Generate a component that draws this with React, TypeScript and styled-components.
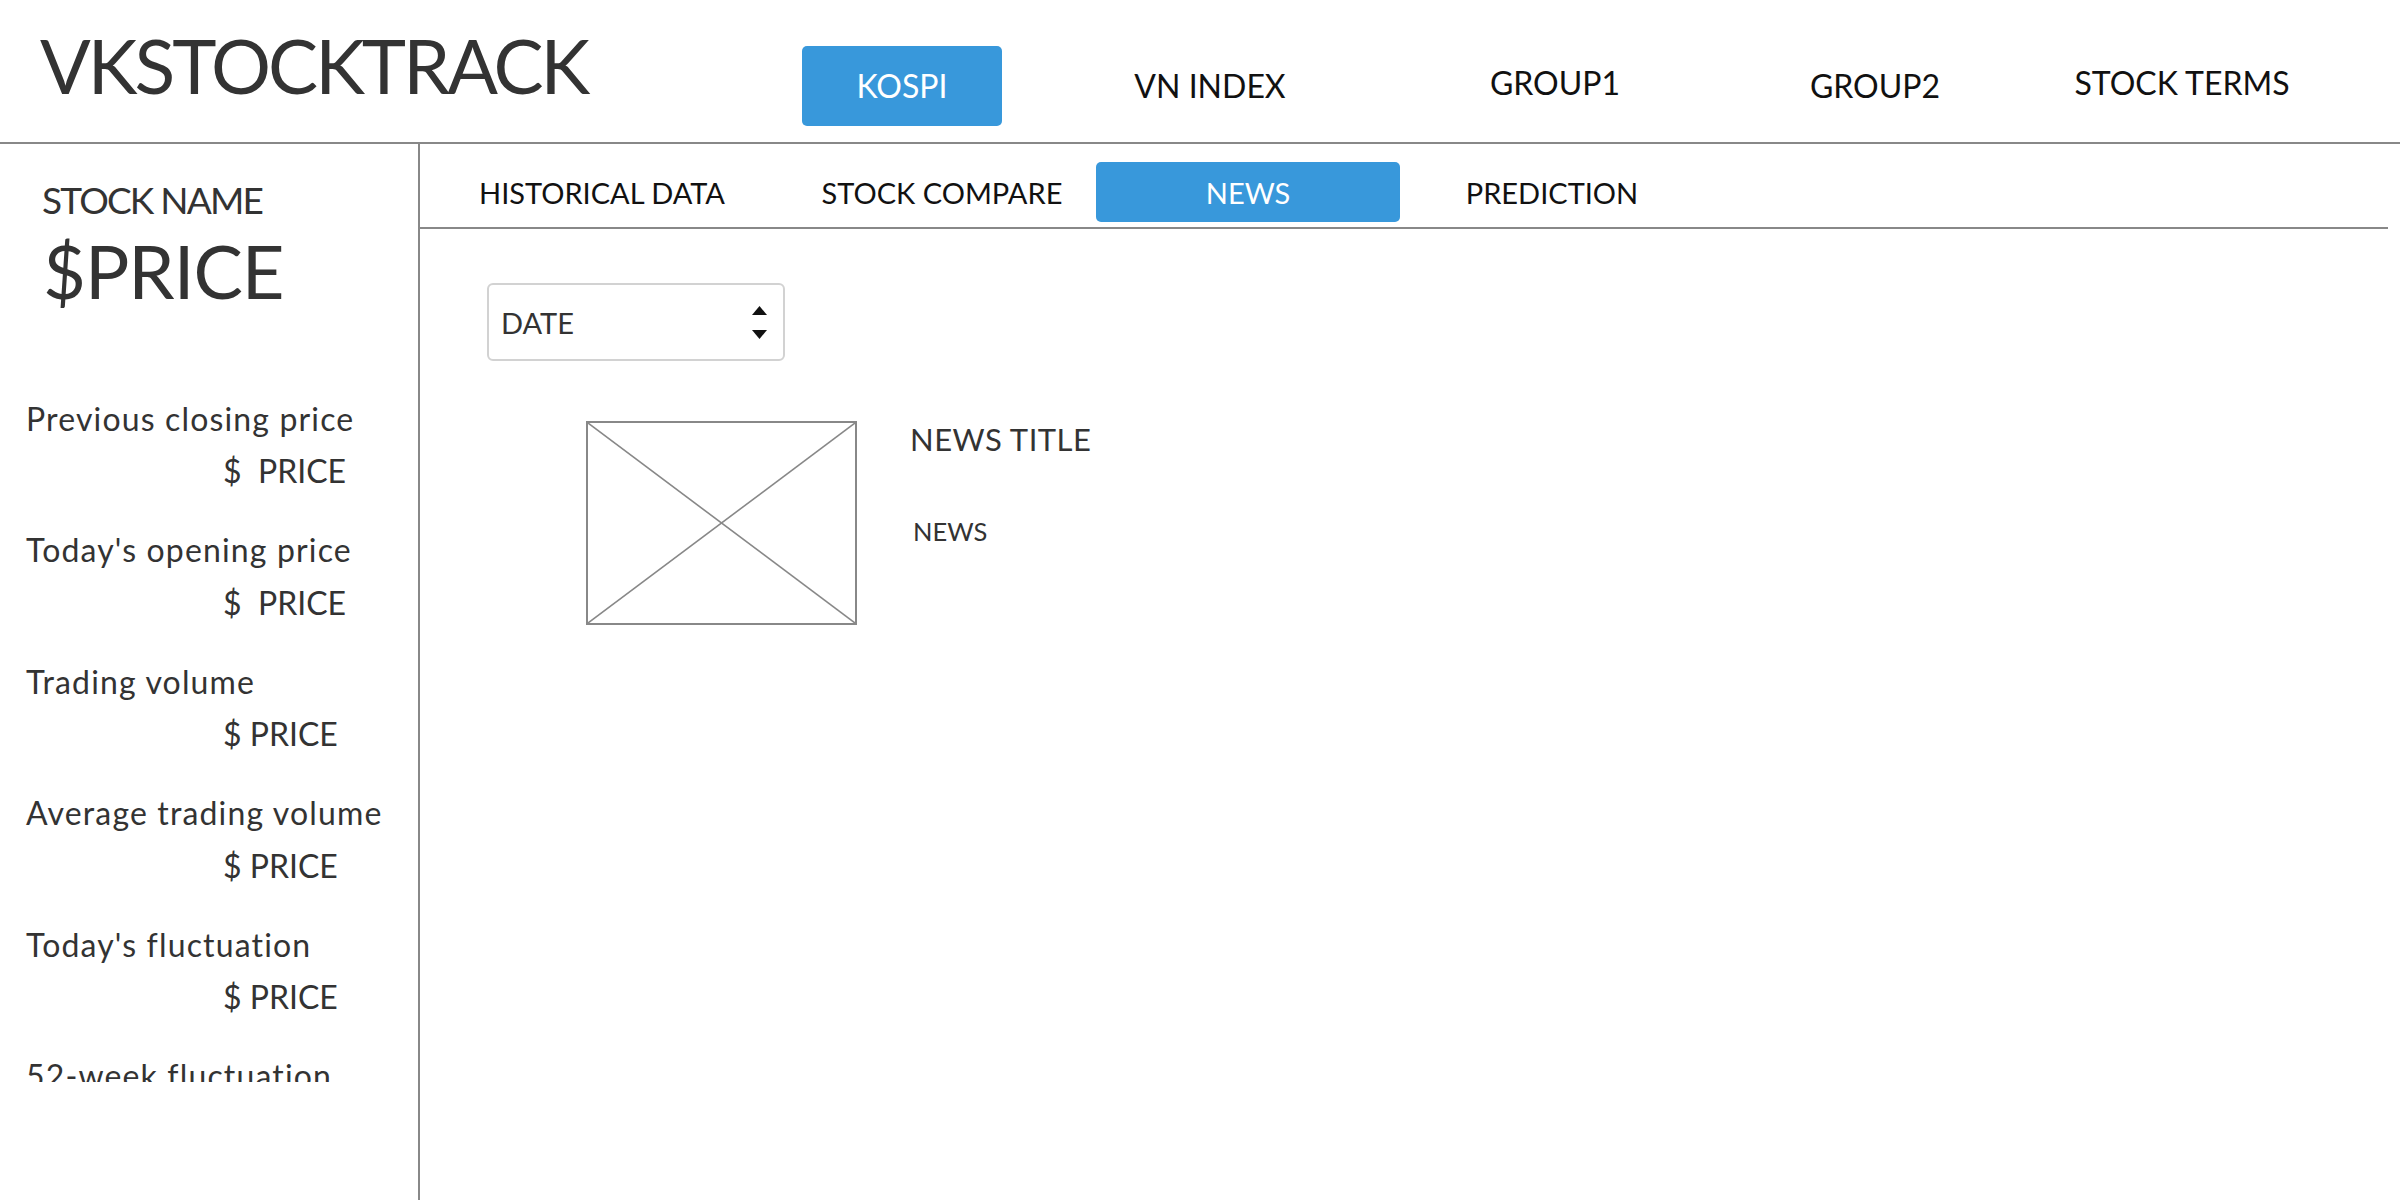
import React from "react";
import styled, { createGlobalStyle } from "styled-components";

const GlobalStyle = createGlobalStyle`
  html, body { margin: 0; padding: 0; background: #fff; }
  body { font-family: Lato, "Open Sans", "Noto Sans", sans-serif; color: #333; }
  * { box-sizing: border-box; }
`;

const Page = styled.div`
  width: 2400px;
  height: 1200px;
  display: flex;
  flex-direction: column;
  overflow: hidden;
  background: #fff;
`;

const Header = styled.header`
  height: 144px;
  flex: none;
  display: grid;
  grid-template-columns: 802px 1fr;
  border-bottom: 2px solid #888;
`;

const Title = styled.h1`
  margin: 0;
  padding: 28px 0 0 40px;
  font-size: 75px;
  line-height: 75px;
  font-weight: 400;
  letter-spacing: -3px;
  color: #333;
  white-space: nowrap;
`;

const Nav = styled.nav`
  display: flex;
  align-items: flex-start;
  padding-top: 46px;
`;

const NavItem = styled.a<{ $active?: boolean; $offset: number; $lift?: number }>`
  flex: none;
  width: 200px;
  height: 80px;
  margin-left: ${(p) => p.$offset}px;
  padding-bottom: ${(p) => (p.$lift ?? 0) * 2}px;
  display: flex;
  align-items: center;
  justify-content: center;
  border-radius: 5px;
  background: ${(p) => (p.$active ? "#3898db" : "transparent")};
  color: ${(p) => (p.$active ? "#fff" : "#111")};
  font-size: 32px;
  line-height: 1;
  text-decoration: none;
  white-space: nowrap;
`;

const Body = styled.div`
  flex: 1;
  display: flex;
  min-height: 0;
`;

const Sidebar = styled.aside`
  width: 420px;
  flex: none;
  border-right: 2px solid #888;
  display: flex;
  flex-direction: column;
`;

const StockName = styled.div`
  padding: 37px 0 0 42px;
  font-size: 37px;
  line-height: 37px;
  letter-spacing: -1.8px;
  color: #333;
`;

const BigPrice = styled.div`
  margin-top: 16px;
  padding-left: 43px;
  font-size: 74px;
  line-height: 74px;
  letter-spacing: -1px;
  color: #333;
`;

const Stats = styled.div`
  flex: none;
  height: 774px;
  overflow: hidden;
  padding: 94.8px 0 0 26px;
`;

const StatItem = styled.div`
  height: 131.5px;
`;

const StatLabel = styled.div`
  font-size: 32px;
  line-height: 31px;
  letter-spacing: 1.15px;
  color: #333;
  white-space: nowrap;
`;

const StatValue = styled.div`
  margin-top: 21.4px;
  padding-left: 197px;
  font-size: 32px;
  line-height: 32px;
  color: #333;
  white-space: pre;
`;

const Main = styled.main`
  flex: 1;
  display: flex;
  flex-direction: column;
  min-width: 0;
`;

const TabBar = styled.div`
  display: flex;
  margin-right: 12px;
  padding: 18px 0 5px 30px;
  border-bottom: 2px solid #888;
`;

const Tab = styled.div<{ $active?: boolean; $offset: number }>`
  flex: none;
  width: 304px;
  height: 60px;
  margin-left: ${(p) => p.$offset}px;
  display: flex;
  align-items: center;
  justify-content: center;
  border-radius: 5px;
  background: ${(p) => (p.$active ? "#3898db" : "transparent")};
  color: ${(p) => (p.$active ? "#fff" : "#111")};
  font-size: 29px;
  line-height: 1;
  white-space: nowrap;
`;

const Content = styled.div`
  padding: 54px 0 0 67px;
`;

const Select = styled.div`
  width: 298px;
  height: 78px;
  border: 2px solid #d2d2d2;
  border-radius: 6px;
  display: flex;
  align-items: center;
  justify-content: space-between;
  padding: 0 16px 0 12px;
  font-size: 29px;
  line-height: 1;
  color: #333;
`;

const NewsItem = styled.article`
  display: flex;
  gap: 53px;
  margin: 60px 0 0 99px;
`;

const Thumb = styled.div`
  width: 271px;
  height: 204px;
  border: 2px solid #888;
  flex: none;
  svg { display: block; }
`;

const NewsText = styled.div`
  padding-top: 3px;
`;

const NewsTitle = styled.h2`
  margin: 0;
  font-size: 31px;
  line-height: 31px;
  font-weight: 400;
  letter-spacing: 0.5px;
  color: #333;
`;

const NewsBody = styled.p`
  margin: 64px 0 0 3px;
  font-size: 25.5px;
  line-height: 25.5px;
  color: #333;
`;

const stats = [
  { label: "Previous closing price", value: "$  PRICE" },
  { label: "Today's opening price", value: "$  PRICE" },
  { label: "Trading volume", value: "$ PRICE" },
  { label: "Average trading volume", value: "$ PRICE" },
  { label: "Today's fluctuation", value: "$ PRICE" },
  { label: "52-week fluctuation", value: "$ PRICE" },
];

export default function App() {
  return (
    <>
      <GlobalStyle />
      <Page>
        <Header>
          <Title>VKSTOCKTRACK</Title>
          <Nav>
            <NavItem $active $offset={0}>KOSPI</NavItem>
            <NavItem $offset={108}>VN INDEX</NavItem>
            <NavItem $offset={145} $lift={3}>GROUP1</NavItem>
            <NavItem $offset={120}>GROUP2</NavItem>
            <NavItem $offset={107} $lift={3}>STOCK TERMS</NavItem>
          </Nav>
        </Header>
        <Body>
          <Sidebar>
            <StockName>STOCK NAME</StockName>
            <BigPrice>$PRICE</BigPrice>
            <Stats>
              {stats.map((s) => (
                <StatItem key={s.label}>
                  <StatLabel>{s.label}</StatLabel>
                  <StatValue>{s.value}</StatValue>
                </StatItem>
              ))}
            </Stats>
          </Sidebar>
          <Main>
            <TabBar>
              <Tab $offset={0}>HISTORICAL DATA</Tab>
              <Tab $offset={36}>STOCK COMPARE</Tab>
              <Tab $offset={2} $active>NEWS</Tab>
              <Tab $offset={0}>PREDICTION</Tab>
            </TabBar>
            <Content>
              <Select>
                <span>DATE</span>
                <svg width="15" height="33" viewBox="0 0 15 33">
                  <path d="M7.5 0 L15 9 L0 9 Z" fill="#111" />
                  <path d="M0 24 L15 24 L7.5 33 Z" fill="#111" />
                </svg>
              </Select>
              <NewsItem>
                <Thumb>
                  <svg width="267" height="200" viewBox="0 0 267 200">
                    <line x1="0" y1="0" x2="267" y2="200" stroke="#888" strokeWidth="1.6" />
                    <line x1="267" y1="0" x2="0" y2="200" stroke="#888" strokeWidth="1.6" />
                  </svg>
                </Thumb>
                <NewsText>
                  <NewsTitle>NEWS TITLE</NewsTitle>
                  <NewsBody>NEWS</NewsBody>
                </NewsText>
              </NewsItem>
            </Content>
          </Main>
        </Body>
      </Page>
    </>
  );
}
